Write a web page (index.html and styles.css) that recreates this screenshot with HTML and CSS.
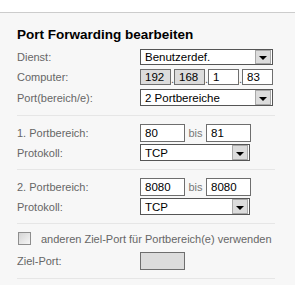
FILE: index.html
```html
<!DOCTYPE html>
<html lang="de">
<head>
    <meta charset="UTF-8" />
    <title>Port Forwarding bearbeiten</title>
    <link rel="stylesheet" href="styles.css">
</head>
<body>
    <div class="topbar"></div>
    <div class="content">
        <h1>Port Forwarding bearbeiten</h1>

        <div class="section first">
            <div class="row">
                <span class="label">Dienst:</span>
                <div class="select wide"><span class="value">Benutzerdef.</span><span class="arrow"></span></div>
            </div>
            <div class="row">
                <span class="label">Computer:</span>
                <div class="ip">
                    <span class="field ipbox disabled">192</span><span class="dot">.</span>
                    <span class="field ipbox disabled">168</span><span class="dot">.</span>
                    <span class="field ipbox">1</span><span class="dot">.</span>
                    <span class="field ipbox">83</span>
                </div>
            </div>
            <div class="row tall">
                <span class="label">Port(bereich/e):</span>
                <div class="select wide"><span class="value">2 Portbereiche</span><span class="arrow"></span></div>
            </div>
        </div>

        <div class="section">
            <div class="row port">
                <span class="label">1. Portbereich:</span>
                <span class="field portbox">80</span><span class="bis">bis</span><span class="field portbox">81</span>
            </div>
            <div class="row tall">
                <span class="label">Protokoll:</span>
                <div class="select narrow"><span class="value">TCP</span><span class="arrow"></span></div>
            </div>
        </div>

        <div class="section">
            <div class="row port">
                <span class="label">2. Portbereich:</span>
                <span class="field portbox">8080</span><span class="bis">bis</span><span class="field portbox">8080</span>
            </div>
            <div class="row tall">
                <span class="label">Protokoll:</span>
                <div class="select narrow"><span class="value">TCP</span><span class="arrow"></span></div>
            </div>
        </div>

        <div class="section last">
            <div class="check-row">
                <span class="checkbox"></span>
                <span class="check-text">anderen Ziel-Port für Portbereich(e) verwenden</span>
            </div>
            <div class="row port">
                <span class="label">Ziel-Port:</span>
                <span class="field portbox disabled"></span>
            </div>
        </div>
    </div>
</body>
</html>
```

FILE: styles.css
```css
body {
    font-family: "Liberation Sans", Arial, sans-serif;
    font-size: 11px;
    margin: 0;
    padding: 0;
    background-color: #f7f7f7;
    color: #666666;
}

.topbar {
    height: 12px;
    background: #ffffff;
    border-bottom: 1px solid #cccccc;
}

.content {
    padding: 0 20px 0 17px;
}

h1 {
    margin: 14px 0 0 0;
    font-size: 13.5px;
    line-height: 16px;
    color: #000000;
}

.section {
    display: flex;
    flex-direction: column;
    gap: 2px;
    padding: 8px 0;
    border-bottom: 1px solid #e6e6e6;
    width: 258px;
}

.section.first {
    gap: 4px;
    padding: 6px 0 9px 0;
}

.section.last {
    gap: 7px;
}

.row {
    display: flex;
    align-items: center;
    height: 16px;
}

.row.tall {
    height: 17px;
}

.row.port {
    height: 18px;
}

.label {
    width: 123px;
    flex-shrink: 0;
}

.field {
    box-sizing: border-box;
    height: 100%;
    display: flex;
    align-items: center;
    padding: 0 4px;
    border: 1px solid #6e6e6e;
    background: #ffffff;
    color: #000000;
    font-size: 11.5px;
}

.field.disabled {
    background: #dcdcdc;
}

.ip {
    display: flex;
    align-items: stretch;
    height: 100%;
}

.ipbox {
    width: 31px;
}

.dot {
    width: 3px;
    display: flex;
    align-items: flex-end;
    justify-content: center;
    color: #555555;
    font-size: 11px;
    line-height: 12px;
}

.portbox {
    width: 45px;
}

.bis {
    width: 21px;
    text-align: center;
    color: #777777;
}

.select {
    box-sizing: border-box;
    height: 100%;
    display: flex;
    align-items: stretch;
    justify-content: space-between;
    border: 1px solid #555555;
    background: #ffffff;
    color: #000000;
    font-size: 11.5px;
}

.select.wide {
    width: 133px;
}

.select.narrow {
    width: 110px;
}

.select .value {
    display: flex;
    align-items: center;
    padding-left: 4px;
}

.select .arrow {
    box-sizing: border-box;
    width: 16px;
    margin-right: 1px;
    background: #dcdcdc;
    border: 1px solid #a8a8a8;
    display: flex;
    align-items: flex-end;
    justify-content: center;
    padding-bottom: 3px;
}

.select .arrow::after {
    content: "";
    border-left: 4px solid transparent;
    border-right: 4px solid transparent;
    border-top: 4px solid #000000;
}

.check-row {
    display: flex;
    align-items: center;
    height: 13px;
    margin-left: 1px;
}

.checkbox {
    box-sizing: border-box;
    width: 13px;
    height: 13px;
    border: 1px solid #8e8e8e;
    background: linear-gradient(135deg, #d4d4d4, #f6f6f6);
}

.check-text {
    margin-left: 10px;
    color: #666666;
}
```
